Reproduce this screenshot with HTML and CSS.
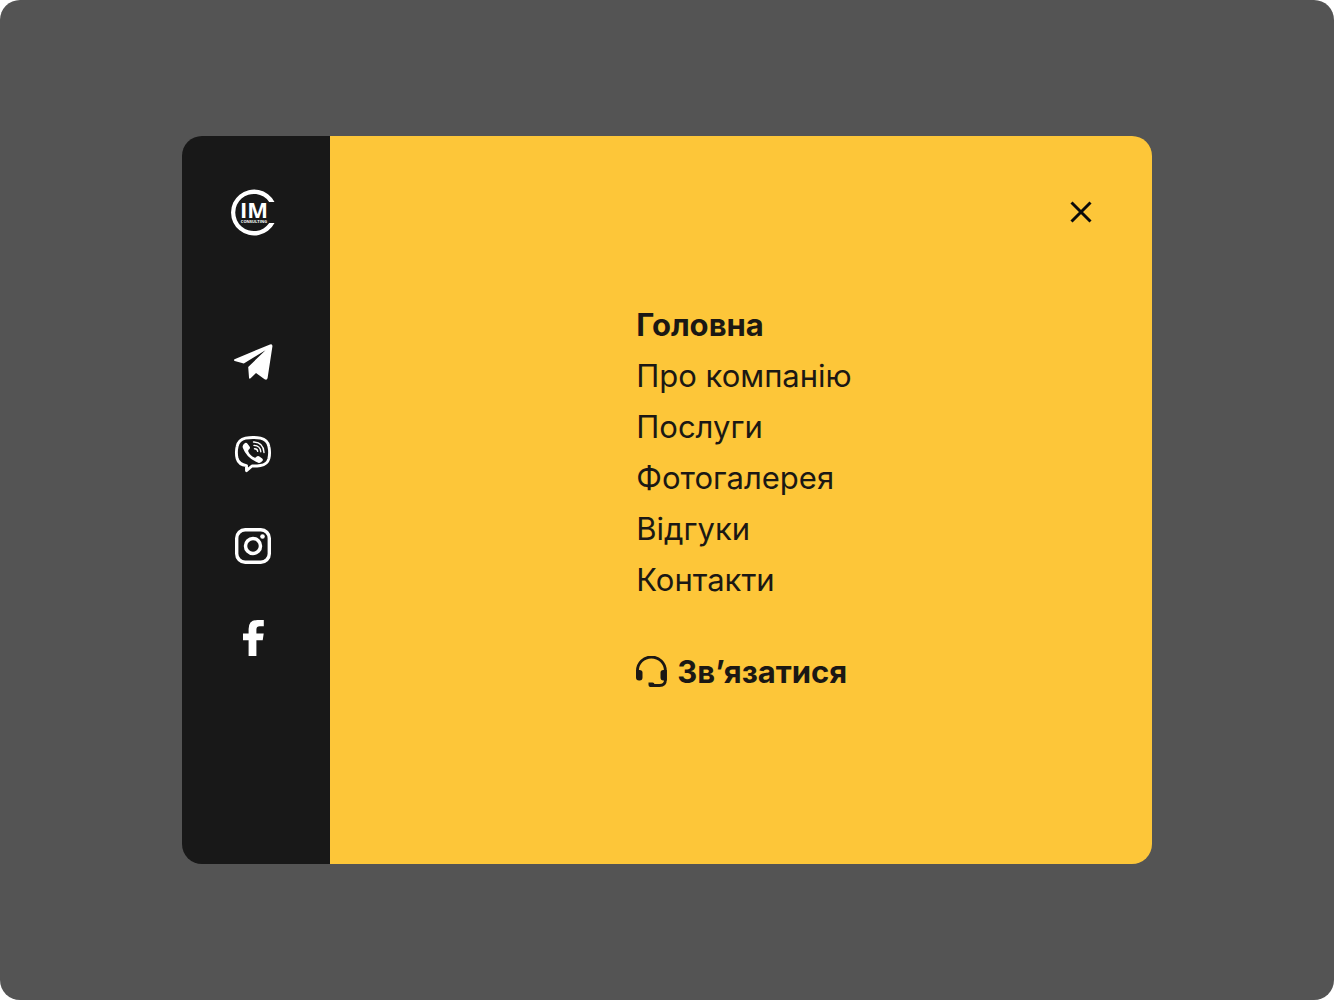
FILE: index.html
```html
<!DOCTYPE html>
<html lang="uk">

<head>
  <meta charset="UTF-8">
  <meta name="viewport" content="width=device-width, initial-scale=1.0">
  <title>CIM Consulting</title>
  <link rel="stylesheet" href="styles.css">
</head>

<body>

  <div class="page">
    <div class="menu">

      <aside class="sidebar">
        <a class="logo" href="#" aria-label="CIM Consulting">
          <svg width="48" height="48" viewBox="0 0 48 48">
            <path d="M45.500 13A23 23 0 1 0 45.500 34H40.200A18.600 18.600 0 1 1 40.200 13Z" fill="#fff" />
            <text class="logo-name" x="25" y="29" text-anchor="middle">IM</text>
            <text class="logo-sub" x="25" y="34" text-anchor="middle">CONSULTING</text>
          </svg>
        </a>

        <nav class="socials">
          <a href="#" aria-label="Telegram">
            <svg width="40" height="40" viewBox="0 0 40 40">
              <path d="M1.500 17.200L37 2.400Q39.700 1.500 39.400 4.500L34.600 36Q34 38.600 31.600 37.300L23 31L17.600 36.300Q16.200 37.400 16 35.400L15.200 25L32.500 8.200L10.800 21.600L1.700 19Q.2 18.200 1.500 17.200Z" fill="#fff" />
            </svg>
          </a>
          <a href="#" aria-label="Viber">
            <svg width="40" height="40" viewBox="0 0 40 40" fill="none" stroke="#fff" stroke-linecap="round">
              <path d="M12.500 4.200Q20 2.700 27.500 4.200Q34.500 5.800 35.900 12.500Q37.300 18.500 35.900 24.500Q34.300 30.600 27.500 31.500Q23 32.200 19 32L13.500 36.600V31.600Q5.800 30.600 4.100 24.500Q2.700 18.500 4.100 12.500Q5.500 5.800 12.500 4.200Z" stroke-width="2.900" stroke-linejoin="round" />
              <path d="M12 9Q13.500 8.300 14.500 9.700L16.700 12.800Q17.500 14.200 16.200 15.300Q14.800 16.300 15.300 17.600Q17 21.800 21.400 23.600Q22.500 24 23.400 22.800Q24.600 21.400 26 22.200L29.200 24.500Q30.400 25.500 29.600 26.800Q27.600 29.500 25.200 28.700Q14 24.800 9.900 14.100Q8.800 11 12 9Z" fill="#fff" stroke="none" />
              <path d="M20.500 8Q30.500 8.400 31 18.500M21 11.400Q27.300 11.800 27.800 17.700M21.500 14.700Q24.400 14.800 24.700 17.300" stroke-width="1.400" />
            </svg>
          </a>
          <a href="#" aria-label="Instagram">
            <svg width="40" height="40" viewBox="0 0 40 40" fill="none" stroke="#fff">
              <rect x="3.700" y="3.700" width="32.600" height="32.600" rx="8.500" stroke-width="3.400" />
              <circle cx="20" cy="20" r="7.500" stroke-width="3.500" />
              <circle cx="29.500" cy="10.500" r="2.300" fill="#fff" stroke="none" />
            </svg>
          </a>
          <a href="#" aria-label="Facebook">
            <svg width="40" height="40" viewBox="0 0 40 40">
              <path d="M15.600 38V22.300H10V15.500H15.600V11Q15.600 2 24.500 2H30.800V8.200H26.800Q23.400 8.200 23.400 11.500V15.500H30.700L29.700 22.300H23.400V38Z" fill="#fff" />
            </svg>
          </a>
        </nav>
      </aside>

      <main class="content">
        <button class="close" type="button" aria-label="Закрити">
          <svg width="24" height="24" viewBox="0 0 24 24">
            <path d="M2.500 2.500L21.500 21.500M21.500 2.500L2.500 21.500" stroke="#0b0b0b" stroke-width="3" />
          </svg>
        </button>

        <div class="links">
          <nav class="nav">
            <a class="active" href="#">Головна</a>
            <a href="#">Про компанію</a>
            <a href="#">Послуги</a>
            <a href="#">Фотогалерея</a>
            <a href="#">Відгуки</a>
            <a href="#">Контакти</a>
          </nav>

          <a class="contact" href="#">
            <svg width="32" height="32" viewBox="0 0 32 32">
              <path d="M1.400 18V15A14 14 0 0 1 29.400 15V24Q29.400 29.500 23.500 29.500H14" fill="none" stroke="#1b1814" stroke-width="2.800" />
              <path d="M0 14H3.500Q6.500 14 6.500 16.500V21.500Q6.500 24.500 3.800 24.500H3Q0 24.500 0 21.500ZM30.800 14H27.300Q24.500 14 24.500 16.500V21.500Q24.500 24.500 27.300 24.500H30.800ZM12.500 26.500H16.500Q18.500 26.500 18.500 28.500V31H14.500Q12.500 31 12.500 29Z" fill="#1b1814" />
            </svg>
            Зв’язатися
          </a>
        </div>
      </main>

    </div>
  </div>

</body>

</html>
```
FILE: styles.css
```css
* {
  box-sizing: border-box;
}

body {
  margin: 0;
  background: #fff;
  font-family: Inter, "Liberation Sans", sans-serif;
  color: #1b1814;
}

a {
  color: inherit;
  text-decoration: none;
}

svg {
  display: block;
}

.page {
  display: flex;
  min-height: 100vh;
  padding: 136px 182px;
  background: #545454;
  border-radius: 20px;
}

.menu {
  display: flex;
  flex: 1;
  border-radius: 20px;
  overflow: hidden;
}

/* left column */
.sidebar {
  display: flex;
  flex-direction: column;
  align-items: center;
  width: 148px;
  padding: 53px 6px 0 0;
  background: #181818;
}

.logo {
  margin-bottom: 105px;
}

.logo-name,
.logo-sub {
  font-family: "Open Sans", sans-serif;
  font-size: 22px;
  font-weight: 700;
  fill: #fff;
}

.logo-sub {
  font-size: 4px;
}

.socials {
  display: flex;
  flex-direction: column;
  gap: 52px;
}

/* menu */
.content {
  display: flex;
  flex: 1;
  flex-direction: column;
  align-items: center;
  position: relative;
  justify-content: center;
  padding: 0 0 4px 6px;
  background: #fdc639;
}

.close {
  position: absolute;
  top: 64px;
  right: 59px;
  padding: 0;
  border: none;
  background: none;
  cursor: pointer;
}

.nav {
  display: flex;
  flex-direction: column;
  margin-bottom: 41px;
}

.nav a,
.contact {
  font-size: 31px;
  line-height: 51px;
}

.nav .active,
.contact {
  font-weight: 700;
}

.contact {
  display: flex;
  align-items: center;
  gap: 9px;
}

@media (max-width: 900px) {
  .page {
    padding: 0;
    border-radius: 0;
  }

  .menu {
    border-radius: 0;
  }

  .sidebar {
    width: 88px;
  }
}
```
